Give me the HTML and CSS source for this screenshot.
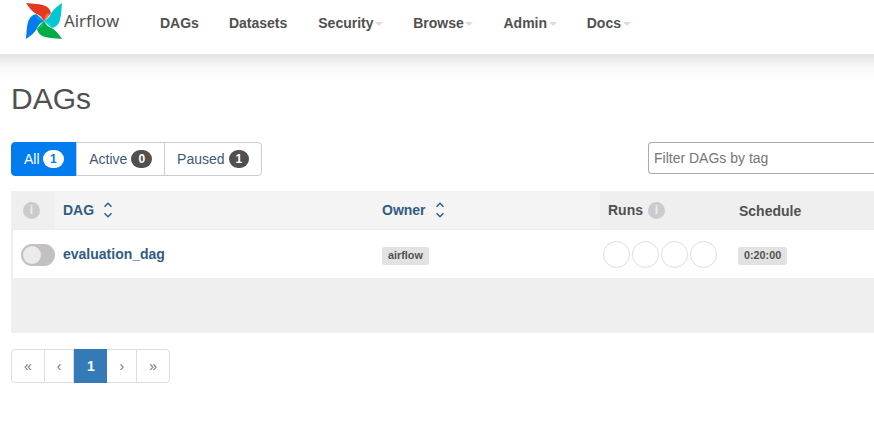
FILE: index.html
```html
<!DOCTYPE html>
<html lang="en">
<head>
<meta charset="utf-8">
<title>DAGs - Airflow</title>
<link rel="stylesheet" href="styles.css">
</head>
<body>
<header class="navbar">
  <a class="brand">
    <svg class="logo" width="36" height="36" viewBox="0 0 36 36">
      <defs>
        <path id="blade" d="M0 0C7 .6 15 .8 19.500 3C23.500 5 25 8.500 24.800 10.500C22.500 13 20.500 15.500 18 18C16 14.500 14.500 12.500 10.500 11C6 8.500 3.500 5 0 0Z"/>
        <path id="fold" d="M18 18C19 15 18.500 13 20 11.500C21.500 10 23.500 10.500 24.800 10.500C22.500 13 20.500 15.500 18 18Z"/>
      </defs>
      <use href="#blade" fill="#e43921"/>
      <use href="#blade" fill="#00c7d4" transform="rotate(90 18 18)"/>
      <use href="#blade" fill="#00ad46" transform="rotate(180 18 18)"/>
      <use href="#blade" fill="#017cee" transform="rotate(270 18 18)"/>
      <use href="#fold" fill="#f9674b"/>
      <use href="#fold" fill="#0bd5e2" transform="rotate(90 18 18)"/>
      <use href="#fold" fill="#04c853" transform="rotate(180 18 18)"/>
      <use href="#fold" fill="#0c9cf8" transform="rotate(270 18 18)"/>
    </svg>
    <span class="brand-name">Airflow</span>
  </a>
  <nav class="menu">
    <a>DAGs</a>
    <a>Datasets</a>
    <a class="dropdown">Security<b class="caret"></b></a>
    <a>Browse<b class="caret"></b></a>
    <a>Admin<b class="caret"></b></a>
    <a>Docs<b class="caret"></b></a>
  </nav>
</header>
<main class="content">
  <h2>DAGs</h2>
  <div class="toolbar">
    <div class="filters">
      <a class="filter selected">All <span class="badge">1</span></a>
      <a class="filter">Active <span class="badge">0</span></a>
      <a class="filter">Paused <span class="badge">1</span></a>
    </div>
    <div class="tag-filter">Filter DAGs by tag</div>
  </div>
  <section class="table">
    <div class="row head">
      <div class="cell toggle-col"><span class="info">i</span></div>
      <div class="cell sortable">DAG
        <svg class="sort" width="8" height="16" viewBox="0 0 8 16"><path d="M.5 4.700L4 1.300L7.500 4.700M.5 11.300L4 14.700L7.500 11.300"/></svg>
      </div>
      <div class="cell sortable">Owner
        <svg class="sort" width="8" height="16" viewBox="0 0 8 16"><path d="M.5 4.700L4 1.300L7.500 4.700M.5 11.300L4 14.700L7.500 11.300"/></svg>
      </div>
      <div class="cell">Runs <span class="info">i</span></div>
      <div class="cell schedule">Schedule</div>
    </div>
    <div class="row body">
      <div class="cell toggle-col"><span class="switch"></span></div>
      <div class="cell dag-name">evaluation_dag</div>
      <div class="cell"><span class="label">airflow</span></div>
      <div class="cell runs"><i></i><i></i><i></i><i></i></div>
      <div class="cell"><span class="label">0:20:00</span></div>
    </div>
  </section>
  <div class="pagination">
    <a>«</a><a>‹</a><a class="current">1</a><a>›</a><a>»</a>
  </div>
</main>
</body>
</html>
```
FILE: styles.css
```css
* { box-sizing: border-box; }
body {
  margin: 0;
  background: #fff;
  color: #51504f;
  font: 14px/20px "Liberation Sans", Arial, sans-serif;
  overflow: hidden;
}
.navbar {
  display: flex;
  height: 54px;
  padding-left: 26px;
  background: #fff;
  box-shadow: 0 -16px 20px 20px rgba(0, 0, 0, .17);
}
.brand { display: flex; width: 119px; padding-top: 3px; }
.logo { flex: none; }
.brand-name {
  margin-left: 2px;
  padding-top: 7px;
  font: 16.8px/22px "Noto Sans", sans-serif;
}
.menu { display: flex; padding-top: 13px; font-weight: bold; }
.menu a { display: flex; align-items: center; height: 20px; padding: 0 15px; }
.menu .dropdown { padding-left: 16px; }
.caret {
  margin: 1px 0 0 1.7px;
  border: 4px solid transparent;
  border-top-color: #e4d5e4;
  border-bottom: 0;
}
.content { padding: 28px 0 0 11px; }
h2 { margin: 0; font-size: 30px; font-weight: 400; line-height: 34px; }
.toolbar { display: flex; justify-content: space-between; margin-top: 26px; }
.filters { display: flex; height: 34px; }
.filter {
  display: flex;
  align-items: center;
  gap: 4px;
  padding: 0 12px;
  margin-left: -1px;
  border: 1px solid #ccc;
  color: #3b5a77;
}
.filter:first-child { margin-left: 0; border-radius: 4px 0 0 4px; }
.filter:last-child { border-radius: 0 4px 4px 0; }
.filter.selected {
  gap: 3.500px;
  padding-right: 12.500px;
  border-color: #017cee;
  background: #017cee;
  color: #fff;
}
.badge {
  padding: 3px 7px;
  border-radius: 10px;
  background: #51504f;
  color: #fff;
  font-size: 12px;
  font-weight: bold;
  line-height: 12px;
}
.selected .badge { background: #fff; color: #017cee; }
.tag-filter {
  width: 226px;
  height: 32px;
  padding-left: 5px;
  border: 1px solid #aaa;
  border-right: 0;
  border-radius: 4px 0 0 4px;
  color: #757575;
  line-height: 30px;
}
.table { height: 142px; margin-top: 15px; background: #efefef; }
.row { display: grid; grid-template-columns: 44px 319px 226px 131px 1fr; }
.head { height: 39px; padding: 1px 0; font-weight: bold; }
.cell { display: flex; align-items: center; padding-left: 8px; }
.head .cell { padding-bottom: 2px; }
.head .toggle-col { padding-left: 12px; }
.sortable { background: #f4f4f4; color: #315c84; }
.sort { margin-left: 10px; fill: none; stroke: currentColor; stroke-width: 1.500; }
.info {
  width: 17px;
  height: 17px;
  margin-top: 1px;
  border-radius: 50%;
  background: #cbcbcb;
  color: #efefef;
  font-size: 12px;
  line-height: 17px;
  text-align: center;
}
.cell + .cell .info { margin-left: 5px; }
.head .schedule { padding-bottom: 0; }
.body {
  height: 48px;
  margin-left: 2px;
  grid-template-columns: 42px 319px 221px 135px 1fr;
  background: #fff;
}
.body .cell { padding-top: 1px; }
.switch {
  width: 34px;
  height: 22px;
  padding: 2px;
  border-radius: 11px;
  background: #c2c1c0;
}
.switch::before {
  content: "";
  display: block;
  width: 18px;
  height: 18px;
  border-radius: 50%;
  background: #ebebeb;
}
.body .dag-name { padding: 0 0 1px 8px; color: #315c84; font-weight: bold; }
.label {
  height: 18px;
  margin-top: 3px;
  padding: 0 6px;
  border-radius: 3px;
  background: #e2e2e2;
  font-size: 10.8px;
  font-weight: bold;
  line-height: 17px;
}
.runs { gap: 2px; }
.runs i { width: 27px; height: 27px; border: 1px solid #ddd; border-radius: 50%; }
.body .toggle-col { padding-top: 1px; }
.pagination { display: flex; margin-top: 16px; }
.pagination a {
  height: 34px;
  padding: 0 12px;
  margin-left: -1px;
  border: 1px solid #ddd;
  color: #777;
  line-height: 33px;
}
.pagination a:first-child { margin-left: 0; border-radius: 4px 0 0 4px; }
.pagination a:last-child { border-radius: 0 4px 4px 0; }
.pagination .current {
  z-index: 1;
  width: 33px;
  margin-left: 0;
  padding: 0 11.500px;
  border-color: #337ab7;
  background: #337ab7;
  color: #fff;
  font-weight: bold;
}
```
